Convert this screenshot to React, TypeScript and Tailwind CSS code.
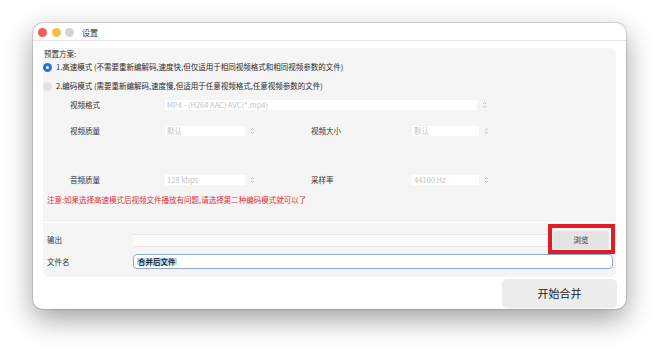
import React from "react";

function UpDown() {
  return (
    <svg width="5" height="8" viewBox="0 0 5 8" fill="none" stroke="#b0b0b0" strokeWidth="0.8">
      <path d="M1 3 L2.5 1.5 L4 3" />
      <path d="M1 5 L2.5 6.5 L4 5" />
    </svg>
  );
}

function Field({ text, w }: { text: string; w: string }) {
  return (
    <div className={`h-[10px] ${w} bg-white flex items-center pl-[2px] text-[7.5px] leading-none text-[#c4c4c4]`}>
      {text}
    </div>
  );
}

export default function App() {
  return (
    <div className="w-[659px] h-[353px] bg-white font-['Noto_Sans_CJK_SC',sans-serif] text-[#2a2a2a] pt-[23px] pl-[33px]">
      <div className="w-[593px] h-[286px] bg-white rounded-[10px] shadow-[0_0_0_1px_rgba(0,0,0,0.12),0_10px_28px_rgba(0,0,0,0.38)] flex flex-col">
        {/* title bar */}
        <div className="h-[18px] border-b border-[#e6e6e6] flex items-center pt-[2px] pl-[5px]">
          <div className="flex gap-[4.5px]">
            <div className="w-[9px] h-[9px] rounded-full bg-[#ec5f57]" />
            <div className="w-[9px] h-[9px] rounded-full bg-[#f2bf4a]" />
            <div className="w-[9px] h-[9px] rounded-full bg-[#d5d5d5]" />
          </div>
          <div className="ml-[8px] text-[8px] leading-none text-[#333]">设置</div>
        </div>

        <div className="px-[10px] pt-[7px] flex flex-col">
          {/* panel 1 */}
          <div className="relative h-[174px] bg-[#f5f5f5] rounded-t-[6px] flex flex-col text-[7.5px] leading-none">
            <div className="h-[12px] flex items-center pl-[1px] text-[#333]">预置方案:</div>
            <div className="h-[14px] flex items-center">
              <div className="w-[9px] h-[9px] rounded-full bg-[#2f6fde] flex items-center justify-center">
                <div className="w-[3px] h-[3px] rounded-full bg-white" />
              </div>
              <span className="ml-[4px]">1.高速模式 (不需要重新编解码,速度快,但仅适用于相同视频格式和相同视频参数的文件)</span>
            </div>
            <div className="h-[14px] mt-[5px] flex items-center">
              <div className="w-[9px] h-[9px] rounded-full bg-[#e2e2e2]" />
              <span className="ml-[4px]">2.编码模式 (需要重新编解码,速度慢,但适用于任意视频格式,任意视频参数的文件)</span>
            </div>
            <div className="h-[14px] mt-[5px] flex items-center pl-[27px]">
              <div className="w-[95px] text-[#333]">视频格式</div>
              <Field text="MP4 - (H264 AAC) AVC(*.mp4)" w="w-[312px]" />
              <div className="ml-[5px]"><UpDown /></div>
            </div>
            <div className="h-[14px] mt-[12px] flex items-center pl-[27px]">
              <div className="w-[95px] text-[#333]">视频质量</div>
              <Field text="默认" w="w-[80px]" />
              <div className="ml-[5px]"><UpDown /></div>
              <div className="ml-[56px] w-[101px] text-[#333]">视频大小</div>
              <Field text="默认" w="w-[67px]" />
              <div className="ml-[5px]"><UpDown /></div>
            </div>
            <div className="h-[14px] mt-[35px] flex items-center pl-[27px]">
              <div className="w-[95px] text-[#333]">音频质量</div>
              <Field text="128 kbps" w="w-[80px]" />
              <div className="ml-[5px]"><UpDown /></div>
              <div className="ml-[56px] w-[101px] text-[#333]">采样率</div>
              <Field text="44100 Hz" w="w-[67px]" />
              <div className="ml-[5px]"><UpDown /></div>
            </div>
            <div className="h-[14px] mt-[6px] flex items-center pl-[4px] text-[#e0313b]">
              注意:如果选择高速模式后视频文件播放有问题,请选择第二种编码模式就可以了
            </div>
          </div>

          {/* panel 2 */}
          <div className="relative mt-[1px] h-[54px] bg-[#f5f5f5] rounded-b-[6px] flex flex-col text-[7.5px] leading-none">
            <div className="h-[18px] mt-[8px] flex items-center pl-[4px]">
              <div className="w-[86px] text-[#333]">输出</div>
              <div className="h-[13px] w-[415px] bg-[#fafafa] border-y border-[#e8e8e8]" />
              <div className="ml-[5px] w-[56px] h-[18px] bg-[#e4e4e4] rounded-[3px] flex items-center justify-center text-[7.5px] text-[#333]">
                浏览
              </div>
            </div>
            <div className="h-[15px] mt-[5px] flex items-center pl-[4px]">
              <div className="w-[86px] text-[#333]">文件名</div>
              <div className="h-[15px] w-[480px] bg-white border border-[#8aa8dc] rounded-[4px] flex items-center pl-[3px]">
                <span className="bg-[#b5d4fc] text-[#111] font-medium px-[1px]">合并后文件</span>
              </div>
            </div>
            <div className="absolute left-[505px] top-[1px] w-[67px] h-[30px] border-[4px] border-[#e21b25]" />
          </div>

          {/* bottom */}
          <div className="flex justify-end mt-[2px] -mr-[1px]">
            <div className="w-[115px] h-[29px] bg-[#ececec] rounded-[5px] flex items-center justify-center text-[11px] leading-none text-[#222]">
              开始合并
            </div>
          </div>
        </div>
      </div>
    </div>
  );
}
